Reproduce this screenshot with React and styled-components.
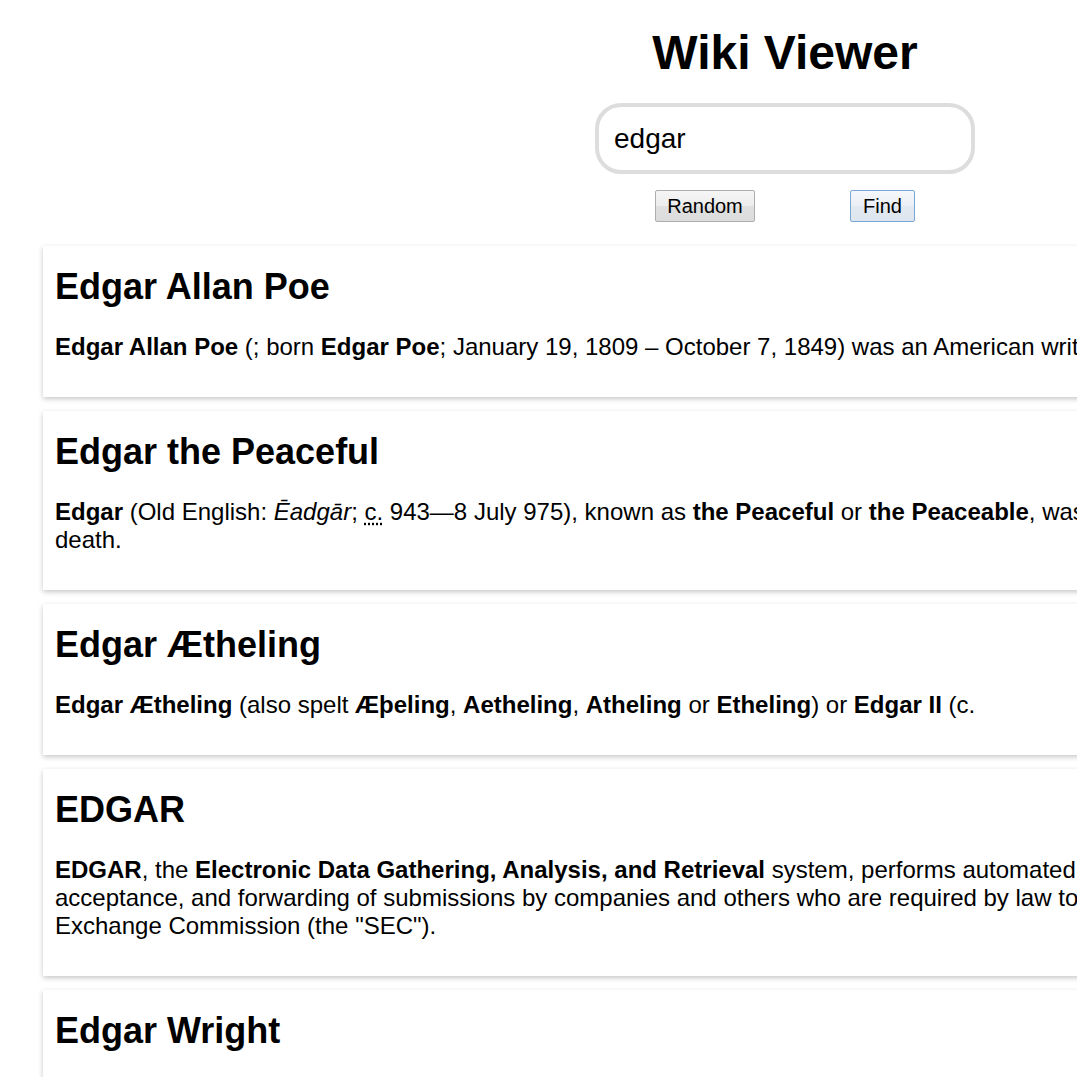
import React from "react";
import styled, { createGlobalStyle } from "styled-components";

const GlobalStyle = createGlobalStyle`
  html {
    overflow: hidden;
  }
  body {
    margin: 0;
    background: #fff;
    color: #000;
    font-family: "Liberation Sans", Arial, sans-serif;
  }
`;

const results = [
  {
    title: "Edgar Allan Poe",
    extract: (
      <>
        <b>Edgar Allan Poe</b> (; born <b>Edgar Poe</b>; January 19, 1809 – October 7,
        1849) was an American writer, editor, and literary critic.
      </>
    ),
  },
  {
    title: "Edgar the Peaceful",
    extract: (
      <>
        <b>Edgar</b> (Old English: <i>Ēadgār</i>; <abbr title="circa">c.</abbr> 943—8 July
        975), known as <b>the Peaceful</b> or <b>the Peaceable</b>, was king of England from
        959 until his death.
      </>
    ),
  },
  {
    title: "Edgar Ætheling",
    extract: (
      <>
        <b>Edgar Ætheling</b> (also spelt <b>Æþeling</b>, <b>Aetheling</b>, <b>Atheling</b>{" "}
        or <b>Etheling</b>) or <b>Edgar II</b> (c.
      </>
    ),
  },
  {
    title: "EDGAR",
    extract: (
      <>
        <b>EDGAR</b>, the <b>Electronic Data Gathering, Analysis, and Retrieval</b> system,
        performs automated collection, validation, indexing, acceptance, and forwarding of
        submissions by companies and others who are required by law to file forms with the
        U.S. Securities and Exchange Commission (the "SEC").
      </>
    ),
  },
  {
    title: "Edgar Wright",
    extract: (
      <>
        <b>Edgar Howard Wright</b> (born 18 April 1974) is an English director, screenwriter,
        producer and actor.
      </>
    ),
  },
];

export default function App() {
  return (
    <Page>
      <GlobalStyle />
      <Header>
        <Title>Wiki Viewer</Title>
        <SearchBox type="text" defaultValue="edgar" />
        <Buttons>
          <Button $width={100}>Random</Button>
          <Button $width={65} $primary>
            Find
          </Button>
        </Buttons>
      </Header>
      <Results>
        {results.map((r) => (
          <Card key={r.title}>
            <CardTitle>{r.title}</CardTitle>
            <Extract>{r.extract}</Extract>
          </Card>
        ))}
      </Results>
    </Page>
  );
}

const Page = styled.div`
  width: 1554px;
  padding: 8px;
`;

const Header = styled.header`
  display: flex;
  flex-direction: column;
  align-items: center;
  padding-top: 17px;
`;

const Title = styled.h1`
  margin: 0;
  font-size: 48px;
  font-weight: bold;
`;

const SearchBox = styled.input`
  box-sizing: border-box;
  width: 380px;
  height: 71px;
  margin-top: 23px;
  padding: 0 15px;
  border: 4px solid #dddddd;
  border-radius: 26px;
  outline: none;
  font-family: inherit;
  font-size: 28px;
  color: #000;
`;

const Buttons = styled.div`
  display: flex;
  gap: 95px;
  margin-top: 16px;
`;

const Button = styled.button`
  box-sizing: border-box;
  width: ${(p) => p.$width}px;
  height: 32px;
  padding: 0;
  border: 1px solid ${(p) => (p.$primary ? "#7aa7d8" : "#adadad")};
  border-radius: 2px;
  background: ${(p) =>
    p.$primary
      ? "linear-gradient(#f4f7fb, #ebf0f6 50%, #e2e9f1 51%, #dde5ee)"
      : "linear-gradient(#f6f6f6, #ececec 50%, #e0e0e0 51%, #dcdcdc)"};
  font-family: inherit;
  font-size: 20px;
  color: #000;
`;

const Results = styled.div`
  display: flex;
  flex-direction: column;
  gap: 14px;
  margin: 24px 35px 0;
`;

const Card = styled.article`
  padding: 20px 12px 36px;
  background: #fff;
  box-shadow: 0 2px 5px rgba(0, 0, 0, 0.22);
`;

const CardTitle = styled.h2`
  margin: 0;
  font-size: 36px;
  font-weight: bold;
`;

const Extract = styled.p`
  margin: 25px 0 0;
  font-size: 24px;

  abbr {
    text-decoration: underline dotted;
    text-underline-offset: 3px;
  }
`;
